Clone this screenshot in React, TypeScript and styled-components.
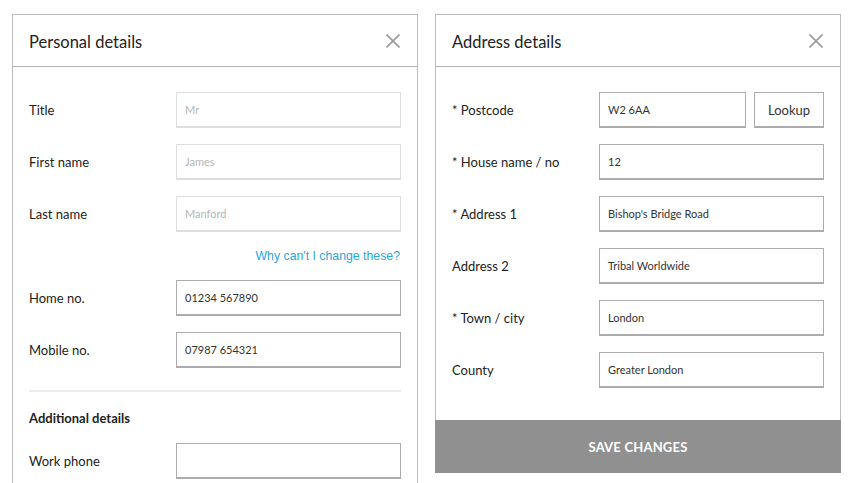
import React from "react";
import styled, { createGlobalStyle } from "styled-components";

const GlobalStyle = createGlobalStyle`
  html, body {
    margin: 0;
    padding: 0;
    background: #ffffff;
    overflow: hidden;
  }
  body {
    font-family: Lato, "Liberation Sans", Arial, sans-serif;
    color: #222;
  }
  * {
    box-sizing: border-box;
  }
`;

type Field = {
  label: string;
  value?: string;
  disabled?: boolean;
};

const personal: Field[] = [
  { label: "Title", value: "Mr", disabled: true },
  { label: "First name", value: "James", disabled: true },
  { label: "Last name", value: "Manford", disabled: true },
];

const contact: Field[] = [
  { label: "Home no.", value: "01234 567890" },
  { label: "Mobile no.", value: "07987 654321" },
];

const address: Field[] = [
  { label: "* House name / no", value: "12" },
  { label: "* Address 1", value: "Bishop's Bridge Road" },
  { label: "Address 2", value: "Tribal Worldwide" },
  { label: "* Town / city", value: "London" },
  { label: "County", value: "Greater London" },
];

const CloseIcon = () => (
  <svg width="14" height="14" viewBox="0 0 14 14">
    <path d="M0.5 0.5 L13.5 13.5 M13.5 0.5 L0.5 13.5" stroke="#9a9a9a" strokeWidth="1.6" fill="none" />
  </svg>
);

const FieldRow = ({ label, value, disabled }: Field) => (
  <Row>
    <Label>{label}</Label>
    <Input $disabled={disabled}>{value}</Input>
  </Row>
);

const App = () => {
  return (
    <>
      <GlobalStyle />
      <Page>
        <Panel $tall>
          <Header>
            <Title>Personal details</Title>
            <Close>
              <CloseIcon />
            </Close>
          </Header>
          <Body>
            {personal.map((f) => (
              <FieldRow key={f.label} {...f} />
            ))}
            <HelpLink>Why can't I change these?</HelpLink>
            {contact.map((f) => (
              <FieldRow key={f.label} {...f} />
            ))}
            <Divider />
            <SectionTitle>Additional details</SectionTitle>
            <FieldRow label="Work phone" value="" />
          </Body>
        </Panel>

        <Panel>
          <Header>
            <Title>Address details</Title>
            <Close>
              <CloseIcon />
            </Close>
          </Header>
          <Body $bottom={32}>
            <Row>
              <Label>* Postcode</Label>
              <InputGroup>
                <Input>W2 6AA</Input>
                <LookupButton>Lookup</LookupButton>
              </InputGroup>
            </Row>
            {address.map((f) => (
              <FieldRow key={f.label} {...f} />
            ))}
          </Body>
          <SaveButton>SAVE CHANGES</SaveButton>
        </Panel>
      </Page>
    </>
  );
};

export default App;

const Page = styled.div`
  display: flex;
  align-items: flex-start;
  gap: 17px;
  padding: 14px 0 0 12px;
  height: 483px;
  overflow: hidden;
`;

const Panel = styled.section<{ $tall?: boolean }>`
  width: 406px;
  border: 1px solid #bdbdbd;
  background: #fff;
  display: flex;
  flex-direction: column;
  min-height: ${(p) => (p.$tall ? "560px" : "auto")};
`;

const Header = styled.header`
  height: 52px;
  border-bottom: 1px solid #b0b0b0;
  display: flex;
  align-items: center;
  justify-content: space-between;
  padding: 3px 17px 0 16px;
`;

const Title = styled.h2`
  margin: 0;
  font-size: 16.5px;
  font-weight: 400;
  color: #222;
`;

const Close = styled.span`
  display: flex;
  width: 14px;
  height: 14px;
  margin-bottom: 2px;
`;

const Body = styled.div<{ $bottom?: number }>`
  display: flex;
  flex-direction: column;
  gap: 16px;
  padding: 25px 16px ${(p) => p.$bottom ?? 16}px 16px;
`;

const Row = styled.div`
  display: grid;
  grid-template-columns: 147px 1fr;
  align-items: center;
`;

const Label = styled.label`
  font-size: 13px;
  color: #222;
`;

const Input = styled.div<{ $disabled?: boolean }>`
  flex: 1;
  height: 36px;
  display: flex;
  align-items: center;
  padding: 0 8px;
  font-size: 11px;
  color: ${(p) => (p.$disabled ? "#b5b5b5" : "#333")};
  border: 1px solid ${(p) => (p.$disabled ? "#dedede" : "#acacac")};
  border-bottom-width: 2px;
  background: #fff;
`;

const InputGroup = styled.div`
  display: flex;
  gap: 8px;
`;

const LookupButton = styled.button`
  width: 70px;
  height: 36px;
  flex: none;
  background: #fff;
  border: 1px solid #acacac;
  border-bottom-width: 2px;
  font-family: inherit;
  font-size: 13px;
  color: #333;
  padding: 0;
`;

const HelpLink = styled.a`
  align-self: flex-end;
  margin-right: 1px;
  font-family: "Liberation Sans", Arial, sans-serif;
  font-size: 12.3px;
  line-height: 16px;
  color: #2aa6e2;
  text-decoration: none;
`;

const Divider = styled.hr`
  margin: 6px 0 1px;
  border: none;
  border-top: 2px solid #ececec;
`;

const SectionTitle = styled.h3`
  margin: 0;
  font-size: 13px;
  font-weight: 700;
  color: #222;
  line-height: 18px;
`;

const SaveButton = styled.button`
  height: 53px;
  margin: 0 -1px -1px;
  border: none;
  background: #909090;
  color: #fff;
  font-family: inherit;
  font-size: 13px;
  font-weight: 700;
  letter-spacing: 0.2px;
`;
